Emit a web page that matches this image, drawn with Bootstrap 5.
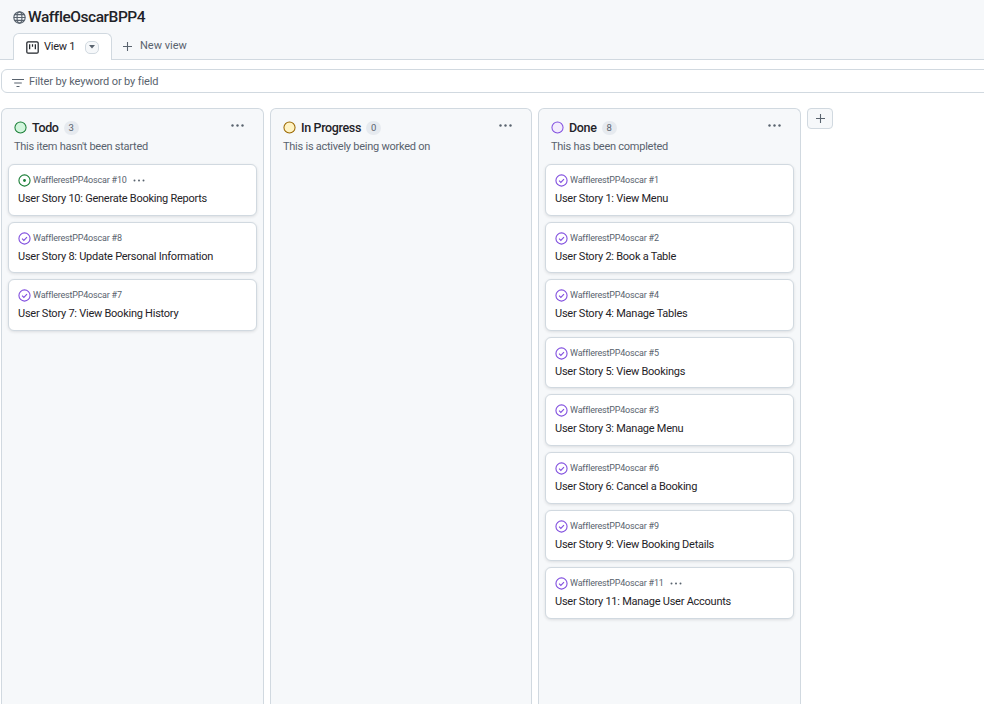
<!DOCTYPE html>
<html lang="en">
  <head>
    <meta charset="UTF-8" />
    <meta name="viewport" content="width=device-width, initial-scale=1.0" />
    <link href="https://cdn.jsdelivr.net/npm/bootstrap@5.3.0/dist/css/bootstrap.min.css" rel="stylesheet" />
    <title>WaffleOscarBPP4</title>
    <style>
      html, body { height: 100%; overflow: hidden; }
      body { font-family: Roboto, "Noto Sans", sans-serif; color: #1f2328; background: #fff; font-size: 11px; letter-spacing: -.25px; }
      .page-head { background: #f6f8fa; height: 60px; border-bottom: 1px solid #d1d9e0; padding: 8px 0 0 13px; }
      .project-title { font-size: 15.5px; font-weight: 500; line-height: 18px; margin: 0; gap: 2px; letter-spacing: -.45px; }
      .view-tabs { margin-top: 7px; height: 27px; }
      .view-tab { width: 99px; height: 27px; background: #fff; border: 1px solid #d1d9e0; border-bottom: 0; border-radius: 6px 6px 0 0; padding-left: 12px; gap: 5px; margin-bottom: -1px; }
      .tab-caret { width: 14px; height: 13px; border: 1px solid #d1d9e0; border-radius: 5px; background: #f6f8fa; margin-left: 5px; }
      .new-view { color: #59636e; padding-left: 11px; gap: 8px; letter-spacing: 0; }
      .filter-bar { height: 24px; margin: 9px -2px 0 1px; border: 1px solid #d1d9e0; border-radius: 6px 0 0 6px; padding: 3px 0 0 10px; gap: 5px; color: #59636e; letter-spacing: -.12px; }
      .board { padding: 15px 0 0 1px; gap: 6px; height: 611px; }
      .board-col { width: 263px; height: 596px; flex: none; background: #f6f8fa; border: 1px solid #d1d9e0; border-bottom: 0; border-radius: 6px 6px 0 0; padding: 7px 6px; }
      .board-col.mid-col { width: 262px; }
      .col-head { height: 48px; padding: 3px 6px 0 6px; }
      .col-title { gap: 5px; line-height: 17px; }
      .col-name { font-size: 12.5px; font-weight: 500; letter-spacing: -.35px; }
      .col-count { width: 15px; height: 14px; border-radius: 8px; background: #e6eaef; color: #59636e; font-size: 9.5px; line-height: 14px; text-align: center; }
      .col-desc { color: #59636e; line-height: 14px; margin-top: 4px; }
      .col-more { margin-left: auto; margin-top: -4px; margin-right: 7px; }
      .item-list { gap: 6px; }
      .item-card { height: 51.6px; border: 1px solid #d1d9e0; border-radius: 6px; box-shadow: 0 1px 3px rgba(31, 35, 40, .12); padding: 9px 9px 0; }
      .item-ref { color: #59636e; font-size: 9px; line-height: 13px; gap: 2px; letter-spacing: -.2px; }
      .item-title { color: #1f2328; margin-top: 4px; line-height: 15px; }
      .add-col { width: 26px; height: 21px; flex: none; border: 1px solid #d1d9e0; border-radius: 4px; background: #f6f8fa; }
    </style>
  </head>
  <body>
    <div class="page-head">
      <h1 class="project-title d-flex align-items-center">
        <svg width="13" height="13" viewBox="0 0 16 16" fill="none" stroke="#59636e" stroke-width="1.4"><circle cx="8" cy="8" r="7" /><ellipse cx="8" cy="8" rx="3" ry="7" /><path d="M1 8h14M2 4.5h12M2 11.5h12" /></svg>
        WaffleOscarBPP4
      </h1>
      <div class="view-tabs d-flex">
        <div class="view-tab d-flex align-items-center">
          <svg width="13" height="13" viewBox="0 0 16 16" fill="none" stroke="#1f2328" stroke-width="1.5"><rect x="1" y="1" width="14" height="14" rx="1.5" /><path d="M4.5 4v6M8 4v3M11.5 4v6" /></svg>
          <span>View 1</span>
          <span class="tab-caret d-flex align-items-center justify-content-center"><svg width="6" height="4" viewBox="0 0 6 4"><path d="M0 0h6L3 3.5z" fill="#59636e" /></svg></span>
        </div>
        <div class="new-view d-flex align-items-center">
          <svg width="9" height="9" viewBox="0 0 10 10" stroke="#59636e" stroke-width="1.2"><path d="M5 0v10M0 5h10" /></svg>
          <span>New view</span>
        </div>
      </div>
    </div>

    <div class="filter-bar d-flex align-items-center">
      <svg width="12" height="10" viewBox="0 0 12 10" stroke="#59636e" stroke-width="1.1"><path d="M0 1.5h12M2.2 5h7.6M4.5 8.5h3" /></svg>
      Filter by keyword or by field
    </div>

    <div class="board d-flex">
      <section class="board-col">
        <div class="col-head">
          <div class="col-title d-flex align-items-center">
            <svg width="13" height="13" viewBox="0 0 14 14"><circle cx="7" cy="7" r="6" fill="#d1f5dc" stroke="#1a7f37" stroke-width="1.1" /></svg>
            <span class="col-name">Todo</span>
            <span class="col-count">3</span>
            <svg class="col-more" width="13" height="3" viewBox="0 0 13 3" fill="#59636e"><circle cx="1.5" cy="1.5" r="1.2" /><circle cx="6.5" cy="1.5" r="1.2" /><circle cx="11.5" cy="1.5" r="1.2" /></svg>
          </div>
          <div class="col-desc">This item hasn't been started</div>
        </div>
        <div class="item-list d-flex flex-column" id="todoList"></div>
      </section>

      <section class="board-col mid-col">
        <div class="col-head">
          <div class="col-title d-flex align-items-center">
            <svg width="13" height="13" viewBox="0 0 14 14"><circle cx="7" cy="7" r="6" fill="#fff3c4" stroke="#9a6700" stroke-width="1.1" /></svg>
            <span class="col-name">In Progress</span>
            <span class="col-count">0</span>
            <svg class="col-more" width="13" height="3" viewBox="0 0 13 3" fill="#59636e"><circle cx="1.5" cy="1.5" r="1.2" /><circle cx="6.5" cy="1.5" r="1.2" /><circle cx="11.5" cy="1.5" r="1.2" /></svg>
          </div>
          <div class="col-desc">This is actively being worked on</div>
        </div>
      </section>

      <section class="board-col">
        <div class="col-head">
          <div class="col-title d-flex align-items-center">
            <svg width="13" height="13" viewBox="0 0 14 14"><circle cx="7" cy="7" r="6" fill="#f3ecfd" stroke="#8250df" stroke-width="1.1" /></svg>
            <span class="col-name">Done</span>
            <span class="col-count">8</span>
            <svg class="col-more" width="13" height="3" viewBox="0 0 13 3" fill="#59636e"><circle cx="1.5" cy="1.5" r="1.2" /><circle cx="6.5" cy="1.5" r="1.2" /><circle cx="11.5" cy="1.5" r="1.2" /></svg>
          </div>
          <div class="col-desc">This has been completed</div>
        </div>
        <div class="item-list d-flex flex-column" id="doneList"></div>
      </section>

      <button class="add-col d-flex align-items-center justify-content-center p-0" type="button" aria-label="Add column">
        <svg width="9" height="9" viewBox="0 0 10 10" stroke="#59636e" stroke-width="1.2"><path d="M5 0v10M0 5h10" /></svg>
      </button>
    </div>

    <script>
      const todo = [
        [10, "Generate Booking Reports", true, true],
        [8, "Update Personal Information"],
        [7, "View Booking History"],
      ];
      const done = [
        [1, "View Menu"],
        [2, "Book a Table"],
        [4, "Manage Tables"],
        [5, "View Bookings"],
        [3, "Manage Menu"],
        [6, "Cancel a Booking"],
        [9, "View Booking Details"],
        [11, "Manage User Accounts", false, true],
      ];
      const iconOpen = '<svg width="13" height="13" viewBox="0 0 14 14" fill="none"><circle cx="7" cy="7" r="6" stroke="#1a7f37" stroke-width="1.2" /><circle cx="7" cy="7" r="1.5" fill="#1a7f37" /></svg>';
      const iconClosed = '<svg width="13" height="13" viewBox="0 0 14 14" fill="none" stroke="#8250df" stroke-width="1.2"><circle cx="7" cy="7" r="6" /><path d="M4.4 7.2l1.9 1.9 3.4-3.6" /></svg>';
      const dots = '<svg class="ms-1" width="12" height="3" viewBox="0 0 12 3" fill="#59636e"><circle cx="1.5" cy="1.5" r="1" /><circle cx="6" cy="1.5" r="1" /><circle cx="10.5" cy="1.5" r="1" /></svg>';

      function fill(id, items) {
        document.getElementById(id).innerHTML = items.map(([num, title, open, more]) => `
          <div class="card item-card">
            <div class="item-ref d-flex align-items-center">${open ? iconOpen : iconClosed}<span>WafflerestPP4oscar #${num}</span>${more ? dots : ""}</div>
            <div class="item-title">User Story ${num}: ${title}</div>
          </div>`).join("");
      }
      fill("todoList", todo);
      fill("doneList", done);
    </script>
    <script src="https://cdn.jsdelivr.net/npm/bootstrap@5.3.0/dist/js/bootstrap.bundle.min.js"></script>
  </body>
</html>
